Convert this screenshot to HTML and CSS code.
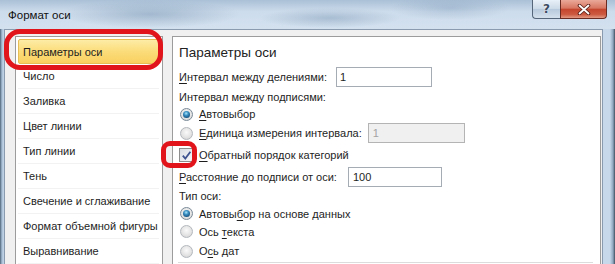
FILE: index.html
```html
<!DOCTYPE html>
<html lang="ru">
<head>
    <meta charset="UTF-8">
    <title>Формат оси</title>
    <link rel="stylesheet" href="styles.css">
</head>
<body>

<div class="window">
    <div class="titlebar">
        <span class="title">Формат оси</span>
        <div class="caption-buttons">
            <span class="cap-btn help">?</span>
            <span class="cap-btn close">
                <svg width="14" height="11" viewBox="0 0 14 11">
                    <path d="M2.5 1.5 L11.5 9.5 M11.5 1.5 L2.5 9.5" stroke="#5a1f18" stroke-width="3.6" stroke-linecap="round"/>
                    <path d="M2.5 1.5 L11.5 9.5 M11.5 1.5 L2.5 9.5" stroke="#ffffff" stroke-width="1.8" stroke-linecap="round"/>
                </svg>
            </span>
        </div>
    </div>

    <div class="client">
        <ul class="nav">
            <li class="nav-item active">Параметры оси</li>
            <li class="nav-item">Число</li>
            <li class="nav-item">Заливка</li>
            <li class="nav-item">Цвет линии</li>
            <li class="nav-item">Тип линии</li>
            <li class="nav-item">Тень</li>
            <li class="nav-item">Свечение и сглаживание</li>
            <li class="nav-item">Формат объемной фигуры</li>
            <li class="nav-item">Выравнивание</li>
        </ul>

        <div class="pane">
            <div class="pane-title">Параметры оси</div>

            <div class="row r1">
                <span><u>И</u>нтервал между делениями:</span>
                <span class="field f1">1</span>
            </div>
            <div class="row r2">Интервал между подписями:</div>
            <div class="row r3">
                <span class="radio on"></span><span><u>А</u>втовыбор</span>
            </div>
            <div class="row r4">
                <span class="radio"></span><span><u>Е</u>диница измерения интервала:</span>
                <span class="field f2 disabled">1</span>
            </div>
            <div class="row r5">
                <span class="check">
                    <svg width="11" height="11" viewBox="0 0 11 11">
                        <path d="M1.8 5.6 L4.3 8.6 L9.4 1.8" fill="none" stroke="#3f5490" stroke-width="1.8"/>
                    </svg>
                </span>
                <span><u>О</u>братный порядок категорий</span>
            </div>
            <div class="row r6">
                <span><u>Р</u>асстояние до подписи от оси:</span>
                <span class="field f3">100</span>
            </div>
            <div class="row r7">Тип оси:</div>
            <div class="row r8">
                <span class="radio on"></span><span>Автовы<u>б</u>ор на основе данных</span>
            </div>
            <div class="row r9">
                <span class="radio"></span><span>Ось <u>т</u>екста</span>
            </div>
            <div class="row r10">
                <span class="radio"></span><span>О<u>с</u>ь дат</span>
            </div>
            <div class="separator"></div>
        </div>
    </div>

    <!-- красные пометки поверх диалога -->
    <div class="mark mark-nav"></div>
    <div class="mark mark-check"></div>
</div>

</body>
</html>
```

FILE: styles.css
```css
* {
    box-sizing: border-box;
}

body {
    margin: 0;
    width: 615px;
    height: 264px;
    overflow: hidden;
    font-family: "Liberation Sans", Arial, sans-serif;
    font-size: 11px;
    color: #1e1e1e;
}

.window {
    position: relative;
    width: 615px;
    height: 264px;
    display: flex;
    flex-direction: column;
    background: linear-gradient(to right, #4f6479 0, #a9c0d6 2px, #c6d8ea 4px, #c6d8ea 610px, #8ea6bd 613px, #3f4e5f 615px);
}

.titlebar {
    height: 29px;
    display: flex;
    align-items: flex-start;
    background:
        radial-gradient(ellipse 90px 14px at 150px 14px, rgba(110, 140, 170, 0.45), transparent),
        radial-gradient(ellipse 70px 10px at 330px 18px, rgba(110, 140, 170, 0.4), transparent),
        radial-gradient(ellipse 60px 12px at 450px 8px, rgba(120, 150, 180, 0.35), transparent),
        linear-gradient(#aac0d6, #cddcec 40%, #d3e1ef);
}

.title {
    padding: 7px 0 0 8px;
    line-height: 16px;
    font-size: 11.5px;
    color: #111;
}

.caption-buttons {
    margin-left: auto;
    margin-right: 8px;
    display: flex;
}

.cap-btn {
    height: 19px;
    display: flex;
    align-items: center;
    justify-content: center;
}

.help {
    width: 28px;
    border: 1px solid #56667a;
    border-top: none;
    border-right: none;
    border-radius: 0 0 0 4px;
    background: linear-gradient(#e8f0f8, #cbd9e7 50%, #b7c9dc 51%, #d4e0ec);
    font-family: "DejaVu Sans", sans-serif;
    font-weight: bold;
    font-size: 12px;
    color: #3a4a60;
    text-shadow: 0 0 2px #fff;
}

.close {
    width: 47px;
    border: 1px solid #6a2b22;
    border-top: none;
    border-radius: 0 0 4px 0;
    background: linear-gradient(#eaa999, #d77661 45%, #c5462e 52%, #cc5a41 80%, #e39a84);
}

.client {
    flex: 1;
    margin: 0 12px 0 4px;
    border: 1px solid #8a9bb0;
    border-bottom: none;
    background: #f0f0f0;
    display: flex;
    padding: 6px 1px 0 10px;
}

.nav {
    list-style: none;
    margin: 0;
    width: 148px;
    flex: none;
    border: 1px solid #9c9c9c;
    border-bottom: none;
    background: #fff;
    padding: 2px 3px 0 2px;
}

.nav-item {
    height: 25px;
    line-height: 24px;
    padding-left: 5px;
    border-bottom: 1px solid #f2f2f2;
    white-space: nowrap;
}

.nav-item.active {
    border: 1px solid #e6bd55;
    border-radius: 2px;
    background: linear-gradient(#fdeca6, #fbdc7a 50%, #f9d160);
    padding-left: 4px;
}

.pane {
    flex: 1;
    margin-left: 9px;
    border: 1px solid #9c9c9c;
    border-bottom: none;
    background: #fff;
    padding: 4px 6px 0 6px;
}

.pane-title {
    height: 24px;
    line-height: 24px;
    font-size: 13.5px;
    color: #222;
}

.row {
    display: flex;
    align-items: center;
    white-space: nowrap;
}

.r1 { height: 23px; }
.r2 { height: 18px; }
.r3 { height: 16px; }
.r4 { height: 22px; }
.r5 { height: 22px; }
.r6 { height: 21px; }
.r7 { height: 18px; }
.r8 { height: 17px; }
.r9 { height: 19px; }
.r10 { height: 20px; }

u {
    text-decoration-thickness: 1px;
    text-underline-offset: 2px;
}

.field {
    height: 20px;
    line-height: 18px;
    border: 1px solid #a6acb4;
    background: #fff;
    padding-left: 3px;
}

.f1 {
    width: 96px;
    margin-left: 9px;
}

.f2 {
    width: 97px;
    margin-left: 6px;
}

.f3 {
    width: 94px;
    margin-left: 11px;
    padding-left: 4px;
}

.field.disabled {
    background: #f0f0f0;
    border-color: #b4b4b4;
    color: #a3a3a3;
    padding-left: 4px;
}

.radio {
    position: relative;
    width: 13px;
    height: 13px;
    flex: none;
    margin: 0 6px 0 1px;
    border-radius: 50%;
    border: 1px solid #b4b8bd;
    background: radial-gradient(circle at 50% 40%, #fafafa 0, #e2e2e2 60%, #cfcfcf);
}

.radio.on {
    border-color: #7a8a98;
}

.radio.on::after {
    content: "";
    position: absolute;
    left: 2px;
    top: 2px;
    width: 7px;
    height: 7px;
    border-radius: 50%;
    background: radial-gradient(circle at 45% 35%, #a9e6fb 0, #3a8fc2 35%, #0f4470 85%);
}

.check {
    width: 14px;
    height: 14px;
    flex: none;
    margin: 0 6px 0 0;
    border: 1px solid #8d8d8d;
    background: linear-gradient(135deg, #d9dde3, #f7f8fa);
    display: flex;
    align-items: center;
    justify-content: center;
}

.separator {
    margin: 1px 1px 0 -1px;
    border-top: 1px solid #dcdcdc;
}

.mark {
    position: absolute;
    border: 5px solid #e2141b;
}

.mark-nav {
    left: 4px;
    top: 29px;
    width: 159px;
    height: 41px;
    border-radius: 16px;
}

.mark-check {
    left: 161px;
    top: 141px;
    width: 36px;
    height: 27px;
    border-radius: 9px;
}
```
